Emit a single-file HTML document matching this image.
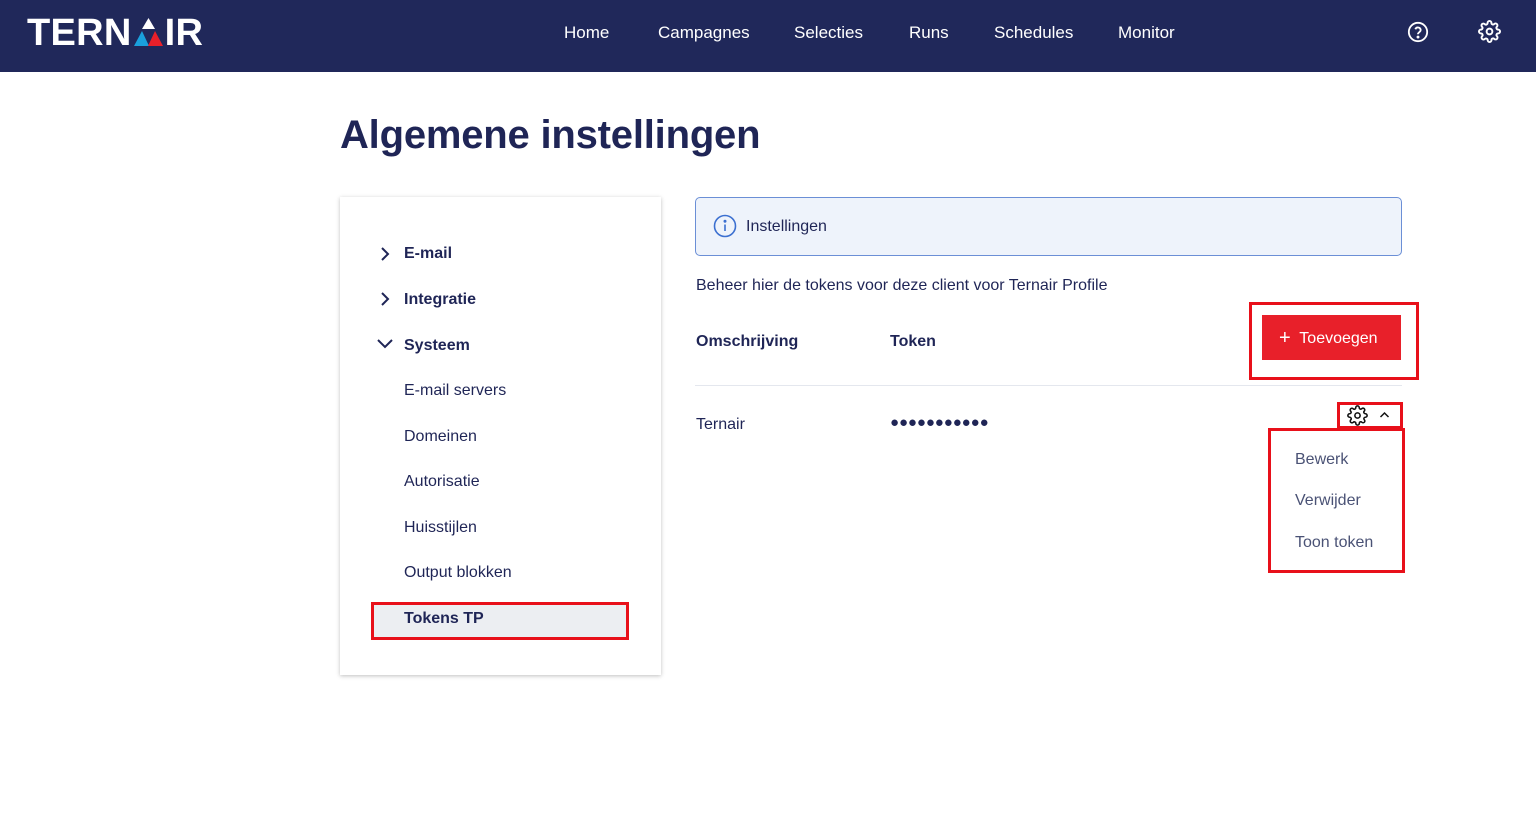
<!DOCTYPE html>
<html><head><meta charset="utf-8"><style>
*{box-sizing:border-box;margin:0;padding:0}
body{width:1536px;height:829px;background:#fff;font-family:"Liberation Sans",sans-serif;color:#1f2556;position:relative;overflow:hidden}
.nav{position:absolute;left:0;top:0;width:1536px;height:72px;background:#20285a}
.logo{position:absolute;left:27px;top:13px;color:#fff;font-weight:bold;font-size:38px;letter-spacing:0.3px;line-height:40px}
.nav a{position:absolute;top:23px;color:#fff;font-size:17px}
.abs{position:absolute}
h1{position:absolute;left:340px;top:113px;font-size:40px;font-weight:bold;color:#1f2556;letter-spacing:-0.2px}
.side{position:absolute;left:340px;top:197px;width:321px;height:478px;background:#fff;box-shadow:0 1px 4px rgba(0,0,0,.25)}
.item{position:absolute;left:404px;font-size:16px;color:#1f2556}
.b{font-weight:bold}
.red{border:3px solid #e8101a}
</style></head><body>
<div class="nav">
 <div class="logo">TERN<svg width="33" height="32" viewBox="0 0 33 32" style="vertical-align:-3px"><polygon points="16.5,2 10,13 23,13" fill="#fff"/><polygon points="10,15 2,30 17,30" fill="#1aa0dc"/><polygon points="23,15 16,30 31,30" fill="#e8202a"/></svg>IR</div>
 <a style="left:564px">Home</a><a style="left:658px">Campagnes</a><a style="left:794px">Selecties</a><a style="left:909px">Runs</a><a style="left:994px">Schedules</a><a style="left:1118px">Monitor</a>
 <svg class="abs" style="left:1407px;top:21px" width="22" height="22" viewBox="0 0 24 24" fill="none" stroke="#fff" stroke-width="2"><circle cx="12" cy="12" r="10"/><path d="M9.1 9a3 3 0 0 1 5.8 1c0 2-3 2.5-3 4.5"/><circle cx="12" cy="17.5" r=".6" fill="#fff"/></svg>
 <svg class="abs" style="left:1478px;top:20px" width="23" height="23" viewBox="0 0 24 24" fill="none" stroke="#fff" stroke-width="2"><circle cx="12" cy="12" r="3"/><path d="M19.4 15a1.65 1.65 0 0 0 .33 1.82l.06.06a2 2 0 1 1-2.83 2.83l-.06-.06a1.65 1.65 0 0 0-1.82-.33 1.65 1.65 0 0 0-1 1.51V21a2 2 0 1 1-4 0v-.09A1.65 1.65 0 0 0 9 19.4a1.65 1.65 0 0 0-1.820.33l-.06.06a2 2 0 1 1-2.83-2.83l.06-.06A1.65 1.65 0 0 0 4.68 15a1.65 1.65 0 0 0-1.51-1H3a2 2 0 1 1 0-4h.09A1.65 1.65 0 0 0 4.6 9a1.65 1.65 0 0 0-.33-1.82l-.06-.06a2 2 0 1 1 2.83-2.83l.06.06A1.65 1.65 0 0 0 9 4.68a1.65 1.65 0 0 0 1-1.51V3a2 2 0 1 1 4 0v.09a1.65 1.65 0 0 0 1 1.51 1.65 1.65 0 0 0 1.82-.33l.06-.06a2 2 0 1 1 2.83 2.83l-.06.06A1.65 1.65 0 0 0 19.4 9a1.65 1.65 0 0 0 1.51 1H21a2 2 0 1 1 0 4h-.09a1.65 1.65 0 0 0-1.51 1z"/></svg>
</div>
<h1>Algemene instellingen</h1>
<div class="side"></div>
<svg class="abs" style="left:378px;top:246px" width="14" height="16" viewBox="0 0 14 16"><path d="M4 2l6 6-6 6" fill="none" stroke="#1f2556" stroke-width="2"/></svg>
<svg class="abs" style="left:378px;top:291px" width="14" height="16" viewBox="0 0 14 16"><path d="M4 2l6 6-6 6" fill="none" stroke="#1f2556" stroke-width="2"/></svg>
<svg class="abs" style="left:376px;top:337px" width="18" height="14" viewBox="0 0 18 14"><path d="M2 3l7 7 7-7" fill="none" stroke="#1f2556" stroke-width="2"/></svg>
<div class="item b" style="top:245px">E-mail</div>
<div class="item b" style="top:291px">Integratie</div>
<div class="item b" style="top:337px">Systeem</div>
<div class="item" style="top:382px">E-mail servers</div>
<div class="item" style="top:428px">Domeinen</div>
<div class="item" style="top:473px">Autorisatie</div>
<div class="item" style="top:519px">Huisstijlen</div>
<div class="item" style="top:564px">Output blokken</div>
<div class="abs red" style="left:371px;top:602px;width:258px;height:38px;background:#eceef2"></div>
<div class="item b" style="top:610px">Tokens TP</div>

<div class="abs" style="left:695px;top:197px;width:707px;height:59px;border:1px solid #6b8fd6;border-radius:5px;background:#eef3fb"></div>
<svg class="abs" style="left:713px;top:214px" width="24" height="24" viewBox="0 0 24 24" fill="none" stroke="#3b6fd0" stroke-width="1.6"><circle cx="12" cy="12" r="10.5"/><path d="M12 10.5v6.5"/><circle cx="12" cy="7.3" r=".7" fill="#3b6fd0"/></svg>
<div class="abs" style="left:746px;top:218px;font-size:16px">Instellingen</div>
<div class="abs" style="left:696px;top:277px;font-size:16px">Beheer hier de tokens voor deze client voor Ternair Profile</div>
<div class="abs b" style="left:696px;top:333px;font-size:16px">Omschrijving</div>
<div class="abs b" style="left:890px;top:333px;font-size:16px">Token</div>
<div class="abs red" style="left:1249px;top:302px;width:170px;height:78px"></div>
<div class="abs" style="left:1262px;top:315px;width:139px;height:45px;background:#e8202a;color:#fff;font-size:16px;line-height:46px;padding-left:17px"><span style="font-size:20px;vertical-align:-1px">+</span>&nbsp; Toevoegen</div>
<div class="abs" style="left:695px;top:385px;width:707px;height:1px;background:#e4e7ee"></div>
<div class="abs" style="left:696px;top:416px;font-size:16px">Ternair</div>
<div class="abs" style="left:890px;top:414px;font-size:15px;letter-spacing:-0.1px">●●●●●●●●●●●</div>
<div class="abs red" style="left:1337px;top:402px;width:66px;height:27px"></div>
<svg class="abs" style="left:1347px;top:405px" width="21" height="21" viewBox="0 0 24 24" fill="none" stroke="#111" stroke-width="1.8"><circle cx="12" cy="12" r="3"/><path d="M19.4 15a1.65 1.65 0 0 0 .33 1.82l.06.06a2 2 0 1 1-2.83 2.83l-.06-.06a1.65 1.65 0 0 0-1.82-.33 1.65 1.65 0 0 0-1 1.51V21a2 2 0 1 1-4 0v-.09A1.65 1.65 0 0 0 9 19.4a1.65 1.65 0 0 0-1.82.33l-.06.06a2 2 0 1 1-2.83-2.830l.06-.06A1.65 1.65 0 0 0 4.68 15a1.65 1.65 0 0 0-1.51-1H3a2 2 0 1 1 0-4h.09A1.65 1.65 0 0 0 4.6 9a1.65 1.65 0 0 0-.33-1.82l-.06-.06a2 2 0 1 1 2.83-2.83l.06.06A1.65 1.65 0 0 0 9 4.68a1.65 1.65 0 0 0 1-1.51V3a2 2 0 1 1 4 0v.09a1.65 1.65 0 0 0 1 1.51 1.65 1.65 0 0 0 1.82-.33l.06-.06a2 2 0 1 1 2.83 2.83l-.06.06A1.65 1.65 0 0 0 19.4 9a1.65 1.65 0 0 0 1.51 1H21a2 2 0 1 1 0 4h-.09a1.65 1.65 0 0 0-1.51 1z"/></svg>
<svg class="abs" style="left:1379px;top:411px" width="11" height="8" viewBox="0 0 11 8"><path d="M1.5 6l4-4 4 4" fill="none" stroke="#111" stroke-width="1.5"/></svg>
<div class="abs red" style="left:1268px;top:428px;width:137px;height:145px"></div>
<div class="abs" style="left:1295px;top:451px;font-size:16px;color:#4a5275">Bewerk</div>
<div class="abs" style="left:1295px;top:492px;font-size:16px;color:#4a5275">Verwijder</div>
<div class="abs" style="left:1295px;top:534px;font-size:16px;color:#4a5275">Toon token</div>
</body></html>
